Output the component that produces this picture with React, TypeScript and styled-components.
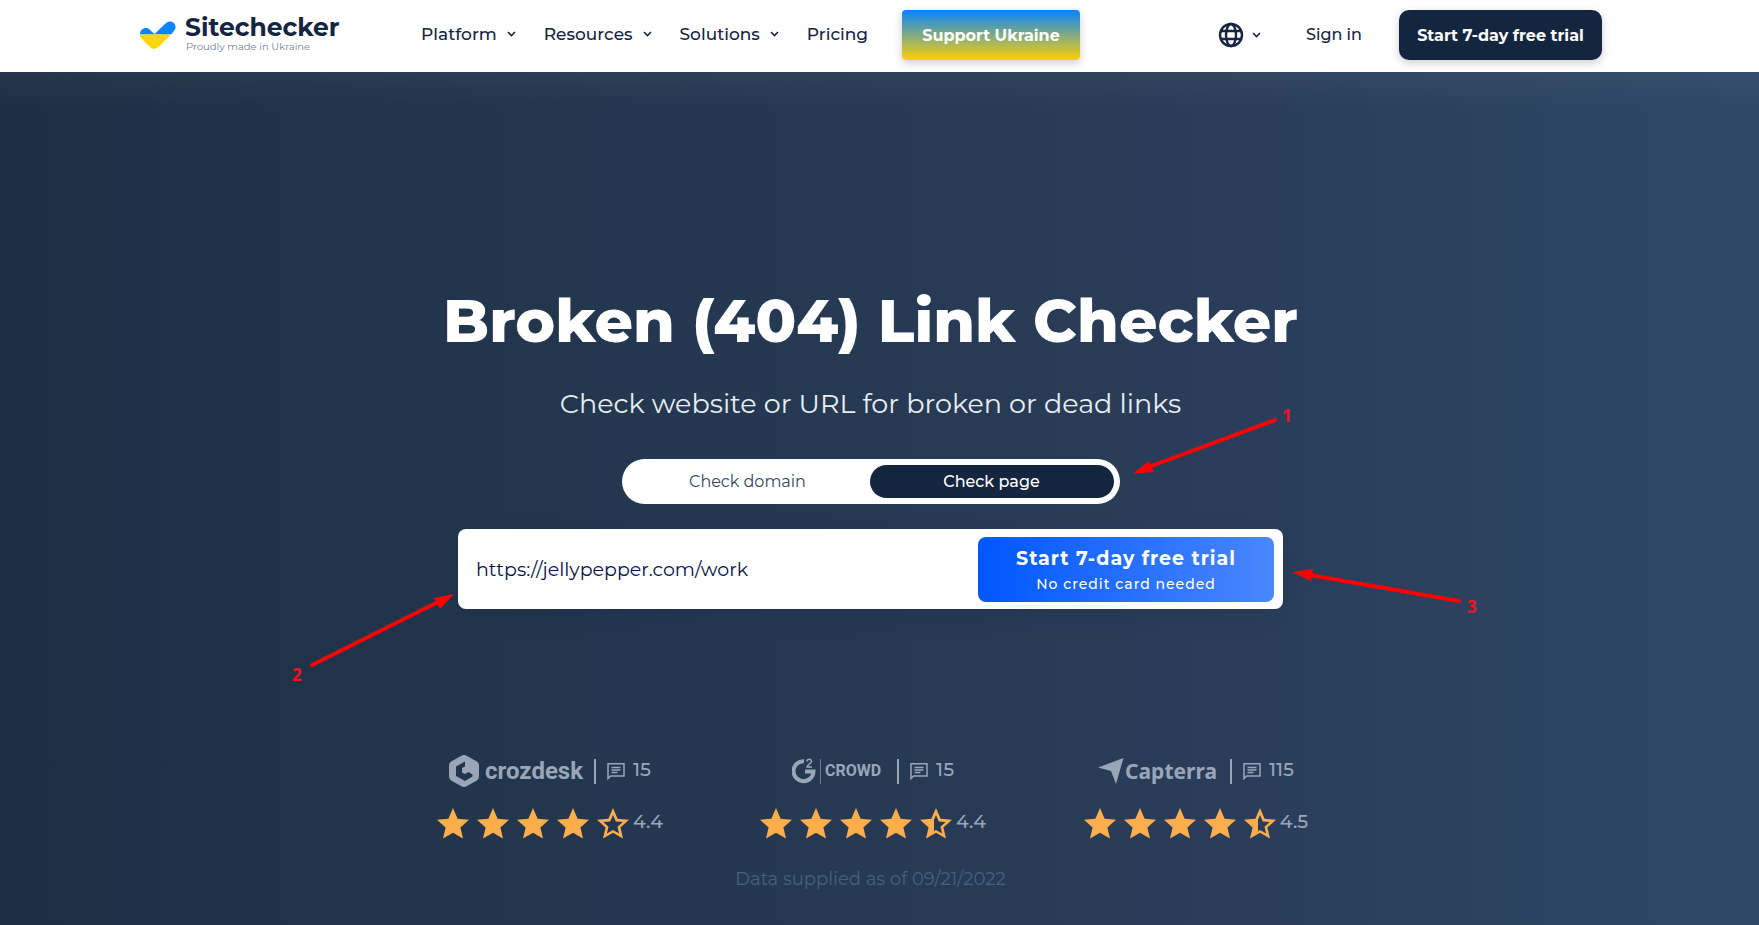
import React, { useState } from "react";
import styled, { createGlobalStyle } from "styled-components";

const GlobalStyle = createGlobalStyle`
  * { box-sizing: border-box; }
  body {
    margin: 0;
    font-family: Montserrat, Inter, "Liberation Sans", sans-serif;
    color: #14253f;
  }
  button, input { font: inherit; }
`;

const Page = styled.div`
  min-height: 100vh;
  display: flex;
  flex-direction: column;
  overflow: hidden;
`;

const Header = styled.header`
  height: 72px;
  padding-right: 17px;
  background: #fff;
`;

const HeaderInner = styled.div`
  max-width: 1462px;
  height: 70px;
  margin: 0 auto;
  display: flex;
  align-items: center;
`;

const Brand = styled.a`
  width: 281px;
  flex: none;
  display: flex;
  align-items: center;
  gap: 9px;
  color: inherit;
  text-decoration: none;
`;

const BrandText = styled.span`
  display: flex;
  flex-direction: column;
  padding-bottom: 2px;
`;

const BrandName = styled.span`
  font-size: 25px;
  font-weight: 700;
  line-height: 25px;
`;

const Tagline = styled.span`
  padding-left: 1px;
  font-size: 10px;
  line-height: 13px;
  color: #72819b;
`;

const Nav = styled.nav`
  flex: 1;
  display: flex;
  align-items: center;
  gap: 28px;
`;

const MenuButton = styled.button`
  display: flex;
  align-items: center;
  gap: 10px;
  padding: 0 0 2px;
  border: 0;
  background: none;
  color: inherit;
  font-size: 17px;
  font-weight: 500;
  line-height: 24px;
  white-space: nowrap;
`;

const NavLink = styled.a<{ $small?: boolean }>`
  padding-bottom: ${(p) => (p.$small ? 0 : 2)}px;
  color: inherit;
  text-decoration: none;
  font-size: ${(p) => (p.$small ? 16 : 17)}px;
  font-weight: 500;
  line-height: 24px;
  white-space: nowrap;
`;

const HeaderButton = styled.a<{ $flag?: boolean }>`
  width: ${(p) => (p.$flag ? 178 : 203)}px;
  height: 50px;
  margin-left: ${(p) => (p.$flag ? 6 : 0)}px;
  display: flex;
  align-items: center;
  justify-content: center;
  border-radius: ${(p) => (p.$flag ? 4 : 10)}px;
  background: ${(p) => (p.$flag ? "linear-gradient(#0584fe, #fdd007)" : "#14253f")};
  box-shadow: 0 3px 8px rgba(0, 0, 0, 0.2);
  color: #fff;
  font-size: 16px;
  font-weight: 700;
  text-decoration: none;
  white-space: nowrap;
`;

const Actions = styled.div`
  display: flex;
  align-items: center;
  gap: 37px;
`;

const LanguageButton = styled(MenuButton)`
  gap: 8px;
  padding: 0;
  margin-right: 8px;
`;

const Hero = styled.main`
  flex: 1;
  padding: 210px 18px 32px 0;
  display: flex;
  flex-direction: column;
  align-items: center;
  background:
    linear-gradient(rgba(255, 255, 255, 0.04), rgba(255, 255, 255, 0) 36px),
    linear-gradient(90deg, #1d2f43, #22364e 30%, #2a3e5b 72%, #2e4866);
`;

const Title = styled.h1`
  margin: 0;
  color: #fff;
  font-size: 60px;
  font-weight: 800;
  line-height: 78px;
`;

const Subtitle = styled.p`
  margin: 26px 0 0;
  color: #e9ecf1;
  font-size: 27px;
  line-height: 36px;
`;

const Tool = styled.div`
  position: relative;
  width: 825px;
  margin-top: 37px;
  display: flex;
  flex-direction: column;
  align-items: center;
  gap: 25px;
`;

const Toggle = styled.div`
  width: 498px;
  height: 45px;
  padding: 6px 6px 6px 4px;
  border-radius: 23px;
  background: #fff;
  display: flex;
`;

const ToggleOption = styled.label`
  flex: 1;
  display: flex;
  align-items: center;
  justify-content: center;
  border-radius: 17px;
  color: #33465f;
  font-size: 16px;
  &:has(input:checked) {
    background: #14253f;
    color: #fff;
    font-weight: 500;
  }
`;

const HiddenRadio = styled.input`
  appearance: none;
  width: 0;
  height: 0;
  margin: 0;
`;

const Form = styled.form`
  width: 100%;
  height: 80px;
  padding: 8px 9px 7px 18px;
  display: flex;
  border-radius: 8px;
  background: #fff;
  box-shadow: 0 8px 24px rgba(20, 37, 63, 0.12);
`;

const UrlInput = styled.input`
  flex: 1;
  min-width: 0;
  padding: 0;
  border: 0;
  outline: 0;
  background: none;
  color: #08124a;
  font-size: 19px;
`;

const Submit = styled.button`
  width: 296px;
  border: 0;
  border-radius: 8px;
  padding: 2px 0 0;
  display: flex;
  flex-direction: column;
  align-items: center;
  justify-content: center;
  gap: 3px;
  background: linear-gradient(90deg, #0057ff, #4b87fd);
  color: #fff;
  font-size: 19px;
  font-weight: 700;
  line-height: 24px;
  letter-spacing: 1px;
`;

const SubmitNote = styled.span`
  font-size: 14px;
  font-weight: 500;
  line-height: 20px;
`;

const Annotations = styled.div`
  position: absolute;
  top: -58px;
  left: -178px;
  width: 1200px;
  height: 300px;
  pointer-events: none;
`;

const Marker = styled.span<{ $x: number; $y: number }>`
  position: absolute;
  left: ${(p) => p.$x}px;
  top: ${(p) => p.$y}px;
  color: #f5121c;
  font-family: "Noto Sans", sans-serif;
  font-size: 17px;
  font-weight: 700;
  line-height: 24px;
`;

const Reviews = styled.section`
  margin-top: 144px;
  padding-left: 5px;
  display: flex;
  gap: 97px;
`;

const Review = styled.article`
  width: 226px;
  display: flex;
  flex-direction: column;
  align-items: center;
  gap: 18px;
  color: #9aa6b8;
  font-size: 19px;
  font-weight: 500;
`;

const ReviewTop = styled.div`
  height: 36px;
  display: flex;
  align-items: center;
`;

const Divider = styled.span`
  width: 2px;
  height: 25px;
  margin: 0 11px;
  background: #9aa6b8;
`;

const Count = styled.span`
  margin-left: 8px;
  padding-bottom: 2px;
  line-height: 24px;
`;

const Stars = styled.div`
  height: 32px;
  display: flex;
  align-items: center;
  gap: 8px;
`;

const Score = styled.span`
  margin-left: -4px;
  padding-bottom: 2px;
  line-height: 24px;
`;

const LOGO_STYLES = {
  crozdesk: { gap: 6, after: 0, family: "Roboto", size: 24 },
  crowd: { gap: 3, after: 5, family: "Roboto", size: 16 },
  capterra: { gap: 1, after: 2, family: '"Noto Sans"', size: 21 },
};

const Logo = styled.span<{ $kind: keyof typeof LOGO_STYLES }>`
  display: flex;
  align-items: center;
  gap: ${(p) => LOGO_STYLES[p.$kind].gap}px;
  margin-right: ${(p) => LOGO_STYLES[p.$kind].after}px;
  font-family: ${(p) => LOGO_STYLES[p.$kind].family}, sans-serif;
  font-size: ${(p) => LOGO_STYLES[p.$kind].size}px;
  font-weight: 700;
  line-height: 32px;
`;

const Supplied = styled.p`
  margin: 28px 0 0;
  color: #4a607e;
  font-size: 18px;
  line-height: 24px;
`;

const Chevron = () => (
  <svg width="9" height="6" viewBox="0 0 9 6" fill="none" aria-hidden="true">
    <path d="M1 1l3.5 3.5L8 1" stroke="#14253f" strokeWidth="1.6" />
  </svg>
);

const BrandMark = () => (
  <svg width="36" height="28" viewBox="0 0 36 28" aria-hidden="true">
    <path d="M0 13.500C0 7.500 6 5.500 9.500 8.500L14.500 13 26 2C29.500 -1.500 36 1 35.500 6.500C35.300 8.500 34.500 9.500 31 13.500Z" fill="#0a84ff" />
    <path d="M0 13.500H31L18.500 26C16 28.400 12.500 28.400 10 26L2.500 18.500C1 17 0 15.500 0 13.500Z" fill="#ffd60a" />
  </svg>
);

const Globe = () => (
  <svg width="26" height="26" viewBox="0 0 26 26" fill="none" stroke="#14253f" strokeWidth="2.400" aria-hidden="true">
    <circle cx="13" cy="13" r="11" />
    <ellipse cx="13" cy="13" rx="5" ry="11" />
    <path d="M3 9h20M3 17h20" />
  </svg>
);

const Comment = () => (
  <svg width="18" height="18" viewBox="0 0 18 18" fill="none" stroke="#9aa6b8" strokeWidth="1.500" aria-hidden="true">
    <path d="M1 16.500V1.700h16v12.200H3.600zM4.500 5.500h9M4.500 8h9M4.500 10.500h6" />
  </svg>
);

const STAR = "M16 1l4.600 10.800 11.400 1-8.600 7.700 2.600 11.100-10-5.900-10 5.900 2.600-11.100L0 12.800l11.400-1z";

const Star = ({ fill = 1 }: { fill?: number }) => (
  <svg width="32" height="32" viewBox="0 0 32 32" aria-hidden="true">
    {fill === 1 ? (
      <path d={STAR} fill="#ffae4c" />
    ) : (
      <>
        <path
          d={`${STAR}M16 8l-2.800 6.500-7 .6 5.300 4.600-1.600 6.800 6.100-3.600 6.100 3.600-1.600-6.800 5.300-4.600-7-.6z`}
          fillRule="evenodd"
          fill="#ffae4c"
        />
        {fill > 0 && <path d="M14 6v18l-6 5 2-9-7-6 9-1z" fill="#ffae4c" />}
      </>
    )}
  </svg>
);

const CrozdeskMark = () => (
  <svg width="30" height="32" viewBox="0 0 30 32" aria-hidden="true">
    <path
      d="M12.500.7a5 5 0 0 1 5 0l10 5.600A5 5 0 0 1 30 10.500v11a5 5 0 0 1-2.500 4.200l-10 5.600a5 5 0 0 1-5 0l-10-5.600A5 5 0 0 1 0 21.500v-11a5 5 0 0 1 2.500-4.200zM16 6.500L7 11.500v9.500l9 5 7.500-4.500v-2l-4-2.500-3.500 2-3-1.500V13l3-1.500z"
      fillRule="evenodd"
      fill="#9aa6b8"
    />
  </svg>
);

const CrowdMark = () => (
  <svg width="30" height="26" viewBox="0 0 30 26" fill="none" aria-hidden="true">
    <path d="M12 3.200A10 10 0 1 0 21.500 13.500H13" stroke="#9aa6b8" strokeWidth="4" />
    <path d="M15 3.500C15 .5 19.500.5 19.500 3.300C19.500 5.300 15 7 15 9H20" stroke="#9aa6b8" strokeWidth="1.500" />
    <path d="M28.500 1v25" stroke="#9aa6b8" strokeOpacity=".6" />
  </svg>
);

const CapterraMark = () => (
  <svg width="26" height="26" viewBox="0 0 26 26" fill="#9aa6b8" aria-hidden="true">
    <path d="M25.500 0L0 9.500l13 3.500 5 13z" />
  </svg>
);

const Arrows = () => (
  <svg width="1200" height="300" viewBox="0 0 1200 300" aria-hidden="true">
    <g stroke="#f00" strokeWidth="4" strokeLinecap="round">
      <path d="M995 19L866 67M32 264L158 201M1179 200L1030 174" />
    </g>
    <path d="M853 72.500L869 60l5 11zM174 193l-20 4 6 11zM1012 171l21-3-2 12z" fill="#f00" />
  </svg>
);

const MENUS = ["Platform", "Resources", "Solutions"];

const REVIEWS = [
  { kind: "crozdesk" as const, mark: <CrozdeskMark />, name: "crozdesk", count: 15, score: "4.4", last: 0 },
  { kind: "crowd" as const, mark: <CrowdMark />, name: "CROWD", count: 15, score: "4.4", last: 0.5 },
  { kind: "capterra" as const, mark: <CapterraMark />, name: "Capterra", count: 115, score: "4.5", last: 0.5 },
];

export default function App() {
  const [mode, setMode] = useState("page");
  const [url, setUrl] = useState("https://jellypepper.com/work");

  return (
    <Page>
      <GlobalStyle />
      <Header>
        <HeaderInner>
          <Brand href="#">
            <BrandMark />
            <BrandText>
              <BrandName>Sitechecker</BrandName>
              <Tagline>Proudly made in Ukraine</Tagline>
            </BrandText>
          </Brand>
          <Nav>
            {MENUS.map((label) => (
              <MenuButton key={label} type="button">
                {label}
                <Chevron />
              </MenuButton>
            ))}
            <NavLink href="#">Pricing</NavLink>
            <HeaderButton href="#" $flag>Support Ukraine</HeaderButton>
          </Nav>
          <Actions>
            <LanguageButton type="button" aria-label="Language">
              <Globe />
              <Chevron />
            </LanguageButton>
            <NavLink href="#" $small>Sign in</NavLink>
            <HeaderButton href="#">Start 7-day free trial</HeaderButton>
          </Actions>
        </HeaderInner>
      </Header>
      <Hero>
        <Title>Broken (404) Link Checker</Title>
        <Subtitle>Check website or URL for broken or dead links</Subtitle>
        <Tool>
          <Toggle role="radiogroup" aria-label="What to check">
            {["domain", "page"].map((value) => (
              <ToggleOption key={value}>
                <HiddenRadio type="radio" name="mode" checked={mode === value} onChange={() => setMode(value)} />
                Check {value}
              </ToggleOption>
            ))}
          </Toggle>
          <Form onSubmit={(e) => e.preventDefault()}>
            <UrlInput aria-label="Page URL" value={url} onChange={(e) => setUrl(e.target.value)} />
            <Submit type="submit">
              Start 7-day free trial
              <SubmitNote>No credit card needed</SubmitNote>
            </Submit>
          </Form>
          <Annotations>
            <Arrows />
            <Marker $x={1002} $y={3}>1</Marker>
            <Marker $x={12} $y={262}>2</Marker>
            <Marker $x={1187} $y={194}>3</Marker>
          </Annotations>
        </Tool>
        <Reviews>
          {REVIEWS.map((r) => (
            <Review key={r.kind}>
              <ReviewTop>
                <Logo $kind={r.kind}>
                  {r.mark}
                  {r.name}
                </Logo>
                <Divider />
                <Comment />
                <Count>{r.count}</Count>
              </ReviewTop>
              <Stars>
                <Star />
                <Star />
                <Star />
                <Star />
                <Star fill={r.last} />
                <Score>{r.score}</Score>
              </Stars>
            </Review>
          ))}
        </Reviews>
        <Supplied>Data supplied as of 09/21/2022</Supplied>
      </Hero>
    </Page>
  );
}
